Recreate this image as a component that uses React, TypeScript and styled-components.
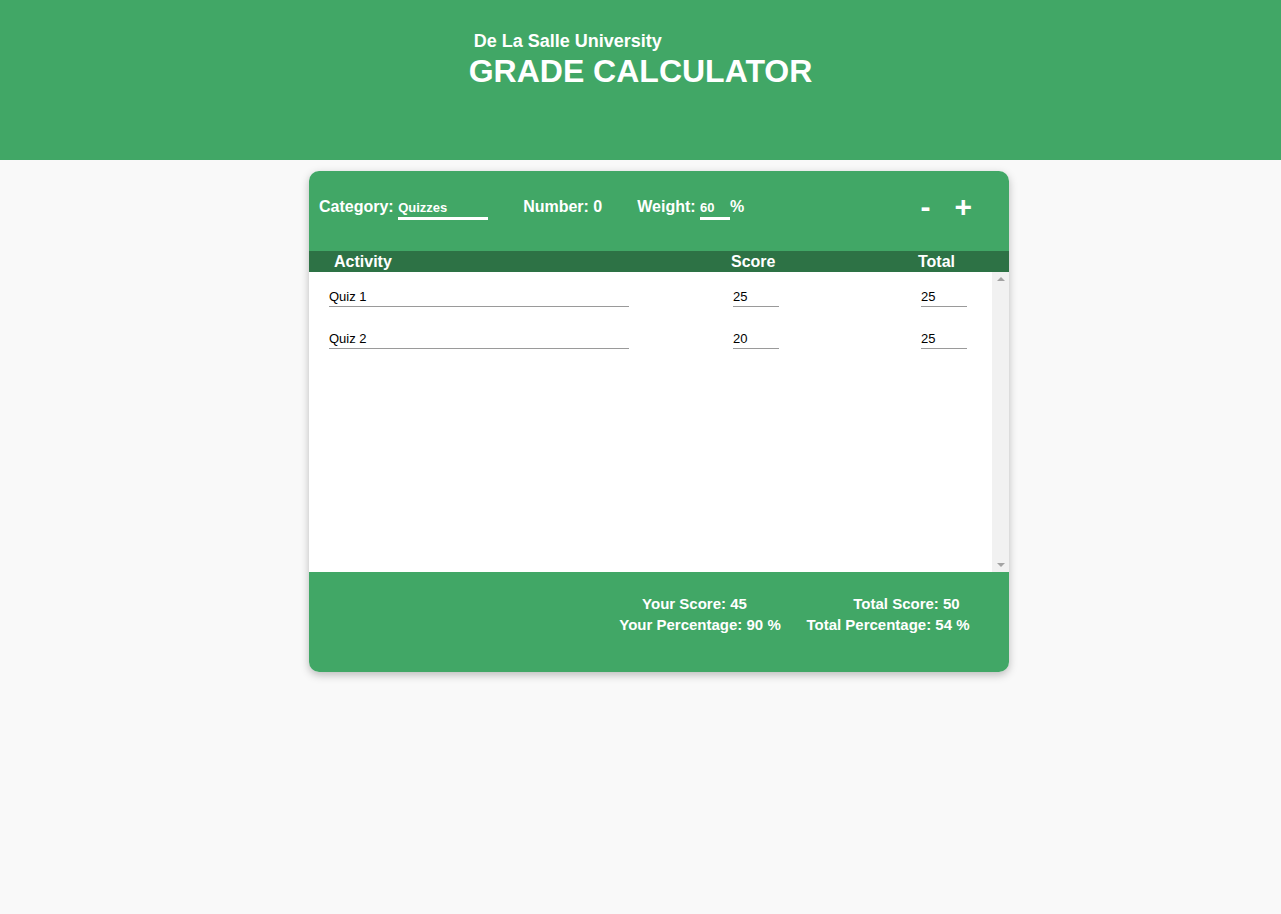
import React from "react";
import styled, { createGlobalStyle } from "styled-components";

const Global = createGlobalStyle`
  html, body { margin: 0; padding: 0; }
  body {
    background: #f9f9f9;
    font-family: "Liberation Sans", Arial, sans-serif;
    min-height: 914px;
  }
  * { box-sizing: border-box; }
`;

const GREEN = "#41a766";
const DARK = "#2d7245";

const Header = styled.header`
  background: ${GREEN};
  height: 160px;
  display: flex;
  justify-content: center;
  align-items: flex-start;
  padding-top: 31px;
  color: #fff;
`;

const TitleBlock = styled.div`
  display: flex;
  flex-direction: column;
  align-items: flex-start;
`;

const Sub = styled.div`
  font-size: 18px;
  font-weight: bold;
  margin-left: 5px;
  line-height: 21px;
`;

const Title = styled.h1`
  font-size: 32px;
  font-weight: bold;
  margin: 1px 0 0;
  line-height: 37px;
`;

const Card = styled.main`
  width: 700px;
  margin: 11px 0 0 calc(50% - 331.5px);
  border-radius: 10px;
  overflow: hidden;
  box-shadow: 0 3px 8px rgba(0, 0, 0, 0.25);
  background: #fff;
`;

const TopBar = styled.div`
  background: ${GREEN};
  height: 80px;
  display: flex;
  align-items: center;
  padding: 0 10px 4px 10px;
  color: #fff;
  font-weight: bold;
  font-size: 16px;
`;

const Fields = styled.div`
  display: flex;
  align-items: baseline;
`;

const Field = styled.label<{ $gap?: number }>`
  display: flex;
  align-items: baseline;
  margin-right: ${(p) => p.$gap ?? 0}px;
  white-space: pre;
`;

const TopInput = styled.input<{ $w: number }>`
  width: ${(p) => p.$w}px;
  background: transparent;
  border: none;
  border-bottom: 3px solid #fff;
  color: #fff;
  font-family: "Liberation Sans", Arial, sans-serif;
  font-weight: bold;
  font-size: 13px;
  padding: 0;
  height: 21px;
  outline: none;
`;

const Buttons = styled.div`
  margin-left: auto;
  margin-right: 27px;
  margin-bottom: 4px;
  display: flex;
  gap: 24px;
  align-items: center;
`;

const Btn = styled.button`
  background: none;
  border: none;
  color: #fff;
  font-family: "Liberation Sans", Arial, sans-serif;
  font-weight: bold;
  font-size: 30px;
  padding: 0;
  line-height: 30px;
  cursor: pointer;
`;

const HeadRow = styled.div`
  background: ${DARK};
  height: 21px;
  display: grid;
  grid-template-columns: 397px 187px 1fr;
  padding-left: 25px;
  color: #fff;
  font-weight: bold;
  font-size: 16px;
  line-height: 21px;
`;

const Body = styled.div`
  height: 300px;
  display: flex;
  background: #fff;
`;

const List = styled.div`
  flex: 1;
  padding-top: 15px;
`;

const Scrollbar = styled.div`
  width: 17px;
  background: #f1f1f1;
  display: flex;
  flex-direction: column;
  justify-content: space-between;
  align-items: center;
  padding: 5px 0;
`;

const Arrow = styled.div<{ $down?: boolean }>`
  width: 0;
  height: 0;
  border-left: 4px solid transparent;
  border-right: 4px solid transparent;
  ${(p) =>
    p.$down
      ? "border-top: 4px solid #a3a3a3;"
      : "border-bottom: 4px solid #a3a3a3;"}
`;

const Row = styled.div`
  display: grid;
  grid-template-columns: 404px 188px 1fr;
  padding-left: 20px;
  height: 42px;
`;

const CellInput = styled.input<{ $w: number }>`
  width: ${(p) => p.$w}px;
  border: none;
  border-bottom: 1px solid #9a9a9a;
  font-family: "Liberation Sans", Arial, sans-serif;
  font-size: 13px;
  color: #000;
  padding: 0;
  height: 20px;
  outline: none;
  background: transparent;
`;

const Footer = styled.div`
  background: ${GREEN};
  height: 100px;
  display: grid;
  grid-template-columns: 186px 190px;
  justify-content: end;
  align-content: start;
  padding: 21px 26px 0 0;
  color: #fff;
  font-weight: bold;
  font-size: 15px;
  line-height: 21px;
  text-align: center;
`;

const Stat = styled.div<{ $shift?: number }>`
  white-space: pre;
  transform: translateX(${(p) => p.$shift ?? 0}px);
`;

const rows = [
  { a: "Quiz 1", s: "25", t: "25" },
  { a: "Quiz 2", s: "20", t: "25" },
];

export default function App() {
  return (
    <>
      <Global />
      <Header>
        <TitleBlock>
          <Sub>De La Salle University</Sub>
          <Title>GRADE CALCULATOR</Title>
        </TitleBlock>
      </Header>
      <Card>
        <TopBar>
          <Fields>
            <Field $gap={35}>
              Category: <TopInput $w={90} defaultValue="Quizzes" />
            </Field>
            <Field $gap={35}>Number: 0</Field>
            <Field>
              Weight: <TopInput $w={30} defaultValue="60" />%
            </Field>
          </Fields>
          <Buttons>
            <Btn>-</Btn>
            <Btn>+</Btn>
          </Buttons>
        </TopBar>
        <HeadRow>
          <span>Activity</span>
          <span>Score</span>
          <span>Total</span>
        </HeadRow>
        <Body>
          <List>
            {rows.map((r, i) => (
              <Row key={i}>
                <CellInput $w={300} defaultValue={r.a} />
                <CellInput $w={46} defaultValue={r.s} />
                <CellInput $w={46} defaultValue={r.t} />
              </Row>
            ))}
          </List>
          <Scrollbar>
            <Arrow />
            <Arrow $down />
          </Scrollbar>
        </Body>
        <Footer>
          <Stat $shift={-5.5}>Your Score: 45</Stat>
          <Stat $shift={18.5}>Total Score: 50</Stat>
          <Stat>Your Percentage: 90 %</Stat>
          <Stat>Total Percentage: 54 %</Stat>
        </Footer>
      </Card>
    </>
  );
}
